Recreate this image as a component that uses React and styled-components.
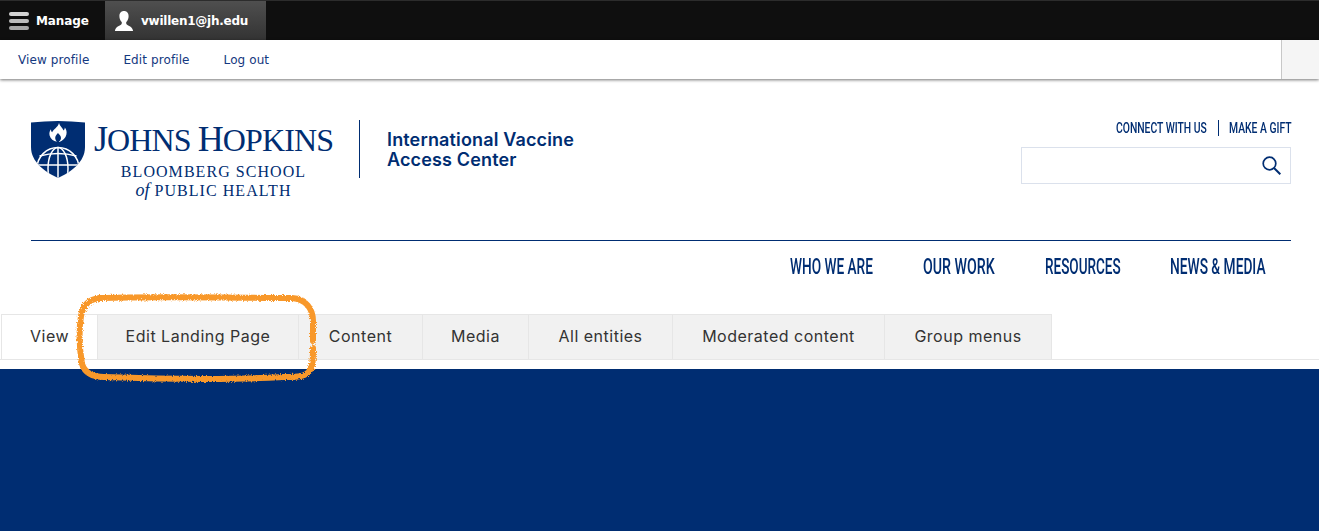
import styled, { createGlobalStyle } from "styled-components";

const navy = "#002d72";

const GlobalStyle = createGlobalStyle`
    html, body {
        margin: 0;
        padding: 0;
        background: #ffffff;
    }
    * {
        box-sizing: border-box;
    }
`;

function MenuIcon() {
    return (
        <svg width="20" height="20" viewBox="0 0 20 20">
            <rect x="0" y="1" width="20" height="4" rx="2" fill="#d4d4d4" />
            <rect x="0" y="8" width="20" height="4" rx="2" fill="#bcbcbc" />
            <rect x="0" y="15" width="20" height="4" rx="2" fill="#a8a8a8" />
        </svg>
    );
}

function UserIcon() {
    return (
        <svg width="20" height="20" viewBox="0 0 20 20">
            <path
                fill="#ffffff"
                d="M10 0C7 0 5.4 2.2 5.4 5.2c0 2.4 1 4.6 2.3 5.8.3.9.1 1.900-.5 2.400C5.800 14.600 1.600 15.300.9 20h18.200c-.7-4.700-4.900-5.400-6.300-6.600-.6-.5-.8-1.500-.5-2.400 1.300-1.200 2.300-3.400 2.300-5.800C14.600 2.200 13 0 10 0z"
            />
        </svg>
    );
}

function Shield() {
    return (
        <svg width="54" height="58" viewBox="0 0 54 58">
            <defs>
                <clipPath id="shield-clip">
                    <path d="M0 2.500Q27 -0.500 54 2.500V27C54 42 40 52 27 58C14 52 0 42 0 27Z" />
                </clipPath>
            </defs>
            <path fill={navy} d="M0 2.500Q27 -0.500 54 2.500V27C54 42 40 52 27 58C14 52 0 42 0 27Z" />
            <path
                fill="#ffffff"
                d="M28 3c.6 3 3.400 4.600 4.600 7.400 .9-.8 1.200-1.800 1.200-2.800 1.600 2 2.200 4.400 1.600 7-.7 3.400-3.600 6-7 7.400l-.6-.2c1.800-1.200 2.600-3 2-5-.5-1.500-1.800-2.300-2.800-3.700-1.200 1.400-2.800 2.800-2.800 4.800 0 1.500.8 2.800 1.800 3.900-3.600-.8-6.600-3-7.400-6.400-.6-2.300.1-4.600 1.400-6.200 0 1.200.3 2.300 1.200 3C22 9.400 27 7.400 28 3z"
            />
            <g clipPath="url(#shield-clip)" fill="none" stroke="#ffffff" strokeWidth="1.500">
                <circle cx="27" cy="48.500" r="21" />
                <ellipse cx="27" cy="48.500" rx="10" ry="21" />
                <path d="M27 27V58" />
                <path d="M8.500 36Q27 31 45.500 36" />
                <path d="M6 45H48" />
            </g>
        </svg>
    );
}

function SearchIcon() {
    return (
        <svg width="19" height="19" viewBox="0 0 19 19" fill="none" stroke={navy} strokeWidth="1.700">
            <circle cx="7.500" cy="7.500" r="6.300" />
            <path d="M12 12L18.300 18.300" strokeWidth="2" />
        </svg>
    );
}

function Scribble() {
    return (
        <ScribbleSvg width="260" height="100" viewBox="0 0 260 100">
            <defs>
                <filter id="rough" x="-5%" y="-10%" width="110%" height="120%">
                    <feTurbulence type="fractalNoise" baseFrequency="0.8" numOctaves="2" seed="4" />
                    <feDisplacementMap in="SourceGraphic" scale="4" />
                </filter>
            </defs>
            <g fill="none" stroke="#f8982a" strokeWidth="6" strokeLinecap="round" filter="url(#rough)">
                <path d="M30 7C90 5 180 7 222 7C236 8 243 18 243 30V50" />
                <path d="M243 57C243 68 243 75 240 79C236 86 228 86 214 86C160 89 90 88 34 86C22 86 15 82 12 73C9 55 9 38 11 25C13 13 20 8 30 7" />
            </g>
        </ScribbleSvg>
    );
}

const tabs = [
    { label: "View", width: 97 },
    { label: "Edit Landing Page", width: 202 },
    { label: "Content", width: 125 },
    { label: "Media", width: 107 },
    { label: "All entities", width: 145 },
    { label: "Moderated content", width: 213 },
    { label: "Group menus", width: 168 },
];

const navItems = [
    { label: "WHO WE ARE", width: 83, squeeze: 0.62 },
    { label: "OUR WORK", width: 72, squeeze: 0.645 },
    { label: "RESOURCES", width: 75, squeeze: 0.615 },
    { label: "NEWS & MEDIA", width: 96, squeeze: 0.625 },
];

export default function App() {
    return (
        <Page>
            <GlobalStyle />
            <Toolbar>
                <ManageItem>
                    <MenuIcon />
                    Manage
                </ManageItem>
                <UserItem>
                    <UserIcon />
                    vwillen1@jh.edu
                </UserItem>
            </Toolbar>
            <Tray>
                <TrayLinks>
                    <TrayLink>View profile</TrayLink>
                    <TrayLink>Edit profile</TrayLink>
                    <TrayLink>Log out</TrayLink>
                </TrayLinks>
                <TrayToggle />
            </Tray>
            <Header>
                <Brand>
                    <Shield />
                    <Wordmark>
                        <WordmarkTitle>
                            <BigCap>J</BigCap>OHNS <BigCap>H</BigCap>OPKINS
                        </WordmarkTitle>
                        <WordmarkSub>BLOOMBERG SCHOOL</WordmarkSub>
                        <WordmarkSub>
                            <em>of</em> PUBLIC HEALTH
                        </WordmarkSub>
                    </Wordmark>
                    <Divider />
                    <SiteName>
                        International Vaccine
                        <br />
                        Access Center
                    </SiteName>
                </Brand>
                <Utility>
                    <UtilityLinks>
                        <UtilityLink $width={92}>
                            <Condensed $squeeze={0.69}>CONNECT WITH US</Condensed>
                        </UtilityLink>
                        <UtilityDivider />
                        <UtilityLink $width={62}>
                            <Condensed $squeeze={0.69}>MAKE A GIFT</Condensed>
                        </UtilityLink>
                    </UtilityLinks>
                    <SearchBox>
                        <SearchIcon />
                    </SearchBox>
                </Utility>
            </Header>
            <Rule />
            <MainNav>
                {navItems.map((item) => (
                    <NavItem key={item.label} $width={item.width}>
                        <Condensed $squeeze={item.squeeze}>{item.label}</Condensed>
                    </NavItem>
                ))}
            </MainNav>
            <TabBar>
                {tabs.map((tab, i) => (
                    <Tab key={tab.label} $active={i === 0} $width={tab.width}>
                        {tab.label}
                    </Tab>
                ))}
                <Scribble />
            </TabBar>
            <Hero />
        </Page>
    );
}

const Page = styled.div`
    width: 1319px;
    height: 531px;
    overflow: hidden;
    display: flex;
    flex-direction: column;
    background: #ffffff;
`;

const Toolbar = styled.div`
    height: 40px;
    display: flex;
    background: #0f0f0f;
    border-top: 1px solid #2c2c2c;
    font-family: "DejaVu Sans", sans-serif;
    font-size: 12px;
    font-weight: 700;
    color: #ffffff;
`;

const ManageItem = styled.div`
    width: 105px;
    padding-left: 9px;
    display: flex;
    align-items: center;
    gap: 7px;
    letter-spacing: -0.1px;
`;

const UserItem = styled.div`
    width: 161px;
    padding-left: 9px;
    display: flex;
    align-items: center;
    gap: 7px;
    letter-spacing: -0.25px;
    background: linear-gradient(#4f4f4f, #333333);
`;

const Tray = styled.div`
    height: 39px;
    display: flex;
    justify-content: space-between;
    background: #ffffff;
    box-shadow: 0 1px 3px rgba(0, 0, 0, 0.55);
    position: relative;
`;

const TrayLinks = styled.div`
    display: flex;
    align-items: center;
    gap: 34px;
    padding-left: 18px;
`;

const TrayLink = styled.a`
    font-family: "DejaVu Sans", sans-serif;
    font-size: 12px;
    letter-spacing: 0.1px;
    color: #14387f;
`;

const TrayToggle = styled.div`
    width: 38px;
    background: #f5f5f5;
    border-left: 1px solid #c8c8c8;
`;

const Header = styled.header`
    height: 161px;
    padding: 41px 28px 0 31px;
    display: flex;
    justify-content: space-between;
    align-items: flex-start;
`;

const Brand = styled.div`
    display: flex;
    align-items: flex-start;
`;

const Wordmark = styled.div`
    width: 239px;
    margin-left: 9px;
    display: flex;
    flex-direction: column;
    align-items: center;
    font-family: "Liberation Serif", serif;
    color: ${navy};
`;

const WordmarkTitle = styled.div`
    height: 43px;
    font-size: 32px;
    line-height: 38px;
    letter-spacing: -0.9px;
    white-space: nowrap;
`;

const BigCap = styled.span`
    font-size: 36px;
`;

const WordmarkSub = styled.div`
    font-size: 16px;
    line-height: 18px;
    letter-spacing: 1.05px;
    white-space: nowrap;
    em {
        font-size: 18px;
        letter-spacing: 0;
    }
`;

const Divider = styled.div`
    width: 1px;
    height: 58px;
    margin: 0 27px 0 26px;
    background: ${navy};
`;

const SiteName = styled.div`
    padding-top: 10px;
    font-family: Inter, sans-serif;
    font-size: 18px;
    font-weight: 600;
    line-height: 20px;
    letter-spacing: 0.15px;
    color: ${navy};
`;

const Utility = styled.div`
    width: 270px;
    display: flex;
    flex-direction: column;
    align-items: flex-end;
`;

const UtilityLinks = styled.div`
    height: 16px;
    display: flex;
    align-items: center;
`;

const UtilityLink = styled.span`
    width: ${(props) => props.$width}px;
    font-family: Roboto, sans-serif;
    font-size: 15px;
    font-weight: 500;
    color: ${navy};
    white-space: nowrap;
`;

const UtilityDivider = styled.span`
    width: 1px;
    height: 16px;
    margin: 0 10px;
    background: ${navy};
`;

// the site's condensed face isn't installed, so squeeze Roboto to its width
const Condensed = styled.span`
    display: inline-block;
    transform: scaleX(${(props) => props.$squeeze});
    transform-origin: left center;
`;

const SearchBox = styled.div`
    width: 270px;
    height: 37px;
    margin-top: 11px;
    padding-right: 9px;
    display: flex;
    align-items: center;
    justify-content: flex-end;
    border: 1px solid #dbe1ec;
`;

const Rule = styled.div`
    height: 1px;
    margin: 0 28px 0 31px;
    background: ${navy};
`;

const MainNav = styled.nav`
    height: 73px;
    padding: 14px 53px 0 0;
    display: flex;
    justify-content: flex-end;
    align-items: flex-start;
    gap: 50px;
`;

const NavItem = styled.a`
    width: ${(props) => props.$width}px;
    font-family: Roboto, sans-serif;
    font-size: 22px;
    font-weight: 500;
    line-height: 24px;
    color: ${navy};
    white-space: nowrap;
`;

const TabBar = styled.div`
    height: 46px;
    padding-left: 1px;
    display: flex;
    position: relative;
    border-bottom: 1px solid #e6e6e6;
`;

const Tab = styled.a`
    width: ${(props) => props.$width}px;
    height: 46px;
    margin-right: -1px;
    padding-bottom: 2px;
    display: flex;
    align-items: center;
    justify-content: center;
    font-family: Inter, sans-serif;
    font-size: 16px;
    letter-spacing: 0.5px;
    color: #333333;
    white-space: nowrap;
    background: ${(props) => (props.$active ? "#ffffff" : "#f1f1f1")};
    border: 1px solid #e6e6e6;
`;

const ScribbleSvg = styled.svg`
    position: absolute;
    left: 70px;
    top: -23px;
    pointer-events: none;
`;

const Hero = styled.div`
    flex: 1;
    margin-top: 9px;
    background: ${navy};
`;
